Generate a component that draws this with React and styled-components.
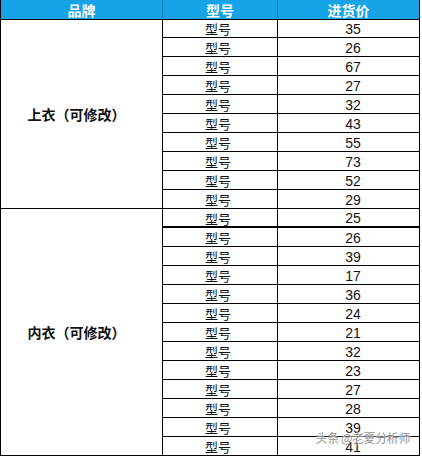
import React from "react";
import styled, { createGlobalStyle } from "styled-components";

const GlobalStyle = createGlobalStyle`
    html, body {
        margin: 0;
        padding: 0;
        background: #fff;
    }
    body {
        font-family: "Liberation Sans", "Noto Sans CJK SC", sans-serif;
    }
`;

const Sheet = styled.div`
    position: relative;
    width: 420px;
    display: grid;
    grid-template-columns: 162px 115px 142px;
    grid-auto-rows: 19px;
    border-left: 1px solid #000;
`;

const HeadCell = styled.div`
    height: 20px;
    box-sizing: border-box;
    background: #17a3e8;
    color: #fff;
    font-family: "Noto Sans CJK SC", sans-serif;
    font-weight: 700;
    font-size: 14px;
    display: flex;
    align-items: center;
    justify-content: center;
    border-right: 1px solid ${(p) => (p.last ? "#000" : "#1577b8")};
    border-bottom: 1px solid #000;
    line-height: 1;
`;

const Brand = styled.div`
    grid-column: 1;
    grid-row: span ${(p) => p.span};
    box-sizing: border-box;
    border-right: 1px solid #000;
    border-bottom: 1px solid #000;
    display: flex;
    align-items: center;
    justify-content: center;
    padding-right: 10px;
    font-family: "Noto Sans CJK SC", sans-serif;
    font-weight: 700;
    font-size: 14px;
    color: #111;
`;

const Cell = styled.div`
    box-sizing: border-box;
    border-right: 1px solid #000;
    border-bottom: ${(p) => (p.thick ? "2px" : "1px")} solid #000;
    display: flex;
    align-items: center;
    justify-content: center;
    font-size: 13px;
    color: #111;
    line-height: 1;
    padding-top: 1px;
`;

const Model = styled(Cell)`
    font-family: "Noto Sans CJK SC", sans-serif;
    padding-right: 4px;
`;

const Price = styled(Cell)`
    font-family: "Liberation Sans", sans-serif;
    font-size: 14px;
    padding-left: 9px;
`;

const Watermark = styled.div`
    position: absolute;
    right: 11px;
    bottom: 10px;
    font-family: "Noto Sans CJK SC", sans-serif;
    font-size: 12px;
    color: rgba(120, 120, 120, 0.85);
    text-shadow: 0 0 2px #fff, 0 0 2px #fff;
    letter-spacing: -0.4px;
`;

const groups = [
    { brand: "上衣（可修改）", prices: [35, 26, 67, 27, 32, 43, 55, 73, 52, 29] },
    { brand: "内衣（可修改）", prices: [25, 26, 39, 17, 36, 24, 21, 32, 23, 27, 28, 39, 41], thickAt: 0 },
];

export default function App() {
    return (
        <>
            <GlobalStyle />
            <Sheet>
                <HeadCell>品牌</HeadCell>
                <HeadCell>型号</HeadCell>
                <HeadCell last>进货价</HeadCell>
                {groups.map((g) =>
                    g.prices.map((p, i) => (
                        <React.Fragment key={g.brand + i}>
                            {i === 0 && <Brand span={g.prices.length}>{g.brand}</Brand>}
                            <Model thick={g.thickAt === i}>型号</Model>
                            <Price thick={g.thickAt === i}>{p}</Price>
                        </React.Fragment>
                    ))
                )}
                <Watermark>头条 @老夏分析师</Watermark>
            </Sheet>
        </>
    );
}
